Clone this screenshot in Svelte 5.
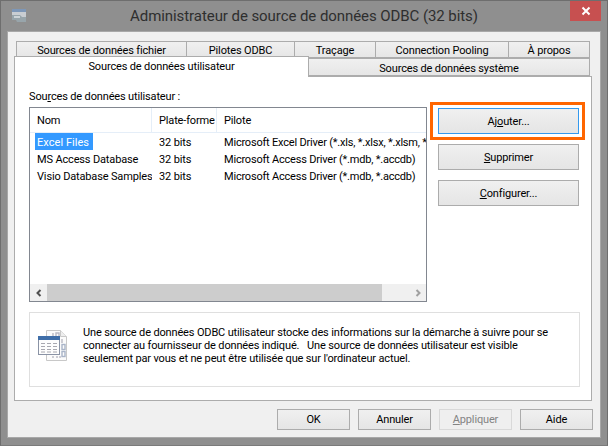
<script>
  const topTabs = [
    { label: 'Sources de données fichier', width: 171 },
    { label: 'Pilotes ODBC', width: 108 },
    { label: 'Traçage', width: 81 },
    { label: 'Connection Pooling', width: 133 },
    { label: 'À propos', width: 81 }
  ];
  const rows = [
    { name: 'Excel Files', bits: '32 bits', driver: 'Microsoft Excel Driver (*.xls, *.xlsx, *.xlsm, *.xlsb)', selected: true },
    { name: 'MS Access Database', bits: '32 bits', driver: 'Microsoft Access Driver (*.mdb, *.accdb)' },
    { name: 'Visio Database Samples', bits: '32 bits', driver: 'Microsoft Access Driver (*.mdb, *.accdb)' }
  ];
</script>

<div class="window">
  <div class="titlebar">
    <svg class="app-icon" width="16" height="16" viewBox="0 0 16 16">
      <rect x="1" y="1" width="14" height="11" fill="#c9cdd2" />
      <rect x="1" y="1" width="14" height="3" fill="#7d97b8" />
      <path d="M1 7h8l2 2h4v5H6l-1-2H1z" fill="#98a5ab" />
      <path d="M3 8h6v2H3z" fill="#ccd3d7" />
    </svg>
    <div class="title">Administrateur de source de données ODBC (32 bits)</div>
    <div class="close">
      <svg width="10" height="10" viewBox="0 0 10 10"><path d="M1.5 1.5l7 7M8.5 1.5l-7 7" stroke="#fff" stroke-width="2" /></svg>
    </div>
  </div>

  <div class="dialog">
    <div class="tabs">
      <div class="tab-row top">
        {#each topTabs as t}
          <div class="tab" style="width:{t.width}px">{t.label}</div>
        {/each}
      </div>
      <div class="tab-row second">
        <div class="tab active">Sources de données utilisateur</div>
        <div class="tab system">Sources de données système</div>
      </div>
    </div>

    <div class="page">
      <div class="label">Sou<u>r</u>ces de données utilisateur :</div>
      <div class="main">
        <div class="list">
          <div class="list-head">
            <div class="col c1">Nom</div>
            <div class="col c2">Plate-forme</div>
            <div class="col c3">Pilote</div>
          </div>
          <div class="list-body">
            {#each rows as r}
              <div class="row">
                <div class="cell c1"><span class:sel={r.selected}>{r.name}</span></div>
                <div class="cell c2">{r.bits}</div>
                <div class="cell c3">{r.driver}</div>
              </div>
            {/each}
          </div>
          <div class="scrollbar">
            <div class="arrow">
              <svg width="8" height="8" viewBox="0 0 8 8"><path d="M5.5 1L2.5 4l3 3" fill="none" stroke="#505050" stroke-width="2" /></svg>
            </div>
            <div class="thumb"></div>
            <div class="arrow right">
              <svg width="8" height="8" viewBox="0 0 8 8"><path d="M2.5 1l3 3-3 3" fill="none" stroke="#a0a0a0" stroke-width="2" /></svg>
            </div>
          </div>
        </div>

        <div class="side">
          <div class="highlight">
            <button class="btn wide focus">Aj<u>o</u>uter...</button>
          </div>
          <button class="btn wide"><u>S</u>upprimer</button>
          <button class="btn wide"><u>C</u>onfigurer...</button>
        </div>
      </div>

      <div class="info">
        <svg class="info-icon" width="34" height="34" viewBox="0 0 34 34">
          <path d="M9.5 1.5h14l6 6v24h-20z" fill="#fbfbfb" stroke="#c8c8c8" />
          <path d="M23.5 1.5v6h6" fill="#eee" stroke="#c8c8c8" />
          <g fill="none" stroke="#b9b9c4" stroke-width="1.4">
            <path d="M16 4v4M19 4h3v4h-3zM25 10v4" />
            <rect x="25" y="15.5" width="3" height="5" stroke="#a9b4c8" />
            <rect x="25" y="22.5" width="3" height="5" stroke="#a9b4c8" />
            <path d="M16 27v2M20 27v2M23 27v2" />
          </g>
          <rect x="1.5" y="7.5" width="21" height="18" fill="#fdfdfd" stroke="#8a93a5" />
          <rect x="1" y="7" width="22" height="4" fill="#3f6ea8" />
          <g stroke="#a8a8b0" stroke-width="1">
            <path d="M4 14.5h4M10 14.5h4M16 14.5h4M4 17.5h4M10 17.5h4M16 17.5h4M4 20.5h4M10 20.5h4M16 20.5h4M4 23h4M10 23h4M16 23h4" />
          </g>
        </svg>
        <div class="info-text">
          Une source de données ODBC utilisateur stocke des informations sur la démarche à suivre pour se<br />
          connecter au fournisseur de données indiqué. &nbsp; Une source de données utilisateur est visible<br />
          seulement par vous et ne peut être utilisée que sur l'ordinateur actuel.
        </div>
      </div>
    </div>

    <div class="footer">
      <button class="btn">OK</button>
      <button class="btn">Annuler</button>
      <button class="btn disabled"><u>A</u>ppliquer</button>
      <button class="btn">Aide</button>
    </div>
  </div>
</div>

<style>
  :global(body) {
    margin: 0;
    background: #8f8f8f;
  }

  .window {
    width: 608px;
    height: 446px;
    box-sizing: border-box;
    background: #8f8f8f;
    border: 1px solid #6e6e6e;
    border-bottom-color: #7b7b7b;
    font-family: Roboto, "Noto Sans", sans-serif;
    font-size: 11px;
    letter-spacing: -0.15px;
    color: #000;
    overflow: hidden;
  }

  .titlebar {
    height: 30px;
    position: relative;
    display: flex;
    justify-content: center;
    align-items: center;
  }

  .app-icon {
    position: absolute;
    left: 10px;
    top: 7px;
  }

  .title {
    font-size: 15px;
    letter-spacing: -0.07px;
    color: #2e2e2e;
  }

  .close {
    position: absolute;
    right: 6px;
    top: -1px;
    width: 31px;
    height: 21px;
    background: #c75050;
    display: flex;
    align-items: center;
    justify-content: center;
  }

  .dialog {
    margin: 0 6px;
    height: 407px;
    box-sizing: border-box;
    background: #f0f0f0;
    padding: 9px 7px 0 6px;
    border: 1px solid #a8a8a8;
  }

  .tabs {
    display: flex;
    flex-direction: column;
  }

  .tab-row {
    display: flex;
  }

  .tab-row.top {
    padding-left: 2px;
    height: 17px;
  }

  .tab-row.second {
    height: 18px;
    align-items: flex-end;
  }

  .tab {
    box-sizing: border-box;
    border: 1px solid #acacac;
    border-left-width: 0;
    background: linear-gradient(#f0f0f0, #e6e6e6);
    text-align: center;
    line-height: 17px;
    white-space: nowrap;
  }

  .tab:first-child {
    border-left-width: 1px;
  }

  .tab.active {
    width: 295px;
    height: 21px;
    margin-top: -3px;
    background: #fff;
    border: 1px solid #acacac;
    border-bottom: none;
    position: relative;
    top: 1px;
    z-index: 1;
    line-height: 20px;
  }

  .tab.system {
    width: 281px;
    height: 18px;
    border-left: none;
    line-height: 20px;
  }

  .page {
    box-sizing: border-box;
    width: 578px;
    height: 325px;
    background: #fff;
    border: 1px solid #acacac;
    padding: 12px 0 0 14px;
  }

  .label {
    height: 18px;
    line-height: 15px;
  }

  .main {
    display: flex;
    gap: 11px;
  }

  .list {
    box-sizing: border-box;
    width: 398px;
    height: 195px;
    border: 1px solid #828790;
    display: flex;
    flex-direction: column;
  }

  .list-head {
    display: flex;
    height: 25px;
    border-bottom: 1px solid #e5eef8;
    box-sizing: border-box;
  }

  .col {
    box-sizing: border-box;
    line-height: 24px;
    padding-top: 1px;
    border-right: 1px solid #e5eef8;
    padding-left: 7px;
    white-space: nowrap;
  }

  .c1 { width: 122px; flex: none; }
  .c2 { width: 65px; flex: none; }
  .c3 { flex: 1; min-width: 0; }
  .col.c3 { border-right: none; }

  .list-body {
    flex: 1;
  }

  .row {
    display: flex;
    height: 17px;
    line-height: 19px;
    white-space: nowrap;
  }

  .cell {
    box-sizing: border-box;
    overflow: hidden;
    padding-left: 7px;
  }

  .cell.c3 {
    letter-spacing: -0.2px;
  }

  .cell.c1 {
    padding-left: 5px;
  }

  .cell.c1 span {
    display: inline-block;
    height: 17px;
    padding: 0 2px;
  }

  .cell.c1 .sel {
    background: #3399ff;
    color: #fff;
    letter-spacing: 0.05px;
    padding-right: 4px;
  }

  .scrollbar {
    display: flex;
    height: 17px;
    background: #f0f0f0;
  }

  .arrow {
    width: 17px;
    flex: none;
    display: flex;
    align-items: center;
    justify-content: center;
  }

  .arrow.right {
    margin-left: auto;
  }

  .thumb {
    width: 335px;
    background: #cdcdcd;
  }

  .side {
    display: flex;
    flex-direction: column;
    gap: 10px;
    width: 141px;
    margin-top: 1px;
  }

  .highlight {
    position: relative;
  }

  .highlight::after {
    content: "";
    position: absolute;
    left: -8px;
    top: -6px;
    width: 149px;
    height: 32px;
    border: 3px solid #ff6600;
    pointer-events: none;
  }

  .btn {
    box-sizing: border-box;
    width: 73px;
    height: 21px;
    padding: 0;
    border: 1px solid #acacac;
    background: linear-gradient(#f0f0f0, #e5e5e5);
    font: inherit;
    letter-spacing: inherit;
    color: #000;
  }

  .btn.wide {
    display: block;
    width: 141px;
    height: 26px;
    padding-top: 1px;
  }

  .btn.focus {
    border-color: #3399ee;
  }

  .btn.disabled {
    color: #838383;
    border-color: #d9d9d9;
    background: #efefef;
  }

  .info {
    box-sizing: border-box;
    display: flex;
    width: 551px;
    height: 75px;
    margin-top: 10px;
    border: 1px solid #dfdfdf;
  }

  .info-icon {
    margin: 16px 0 0 7px;
    flex: none;
  }

  .info-text {
    margin: 13px 0 0 12px;
    line-height: 13px;
    white-space: nowrap;
  }

  .footer {
    display: flex;
    justify-content: flex-end;
    gap: 8px;
    margin-top: 8px;
  }
</style>
